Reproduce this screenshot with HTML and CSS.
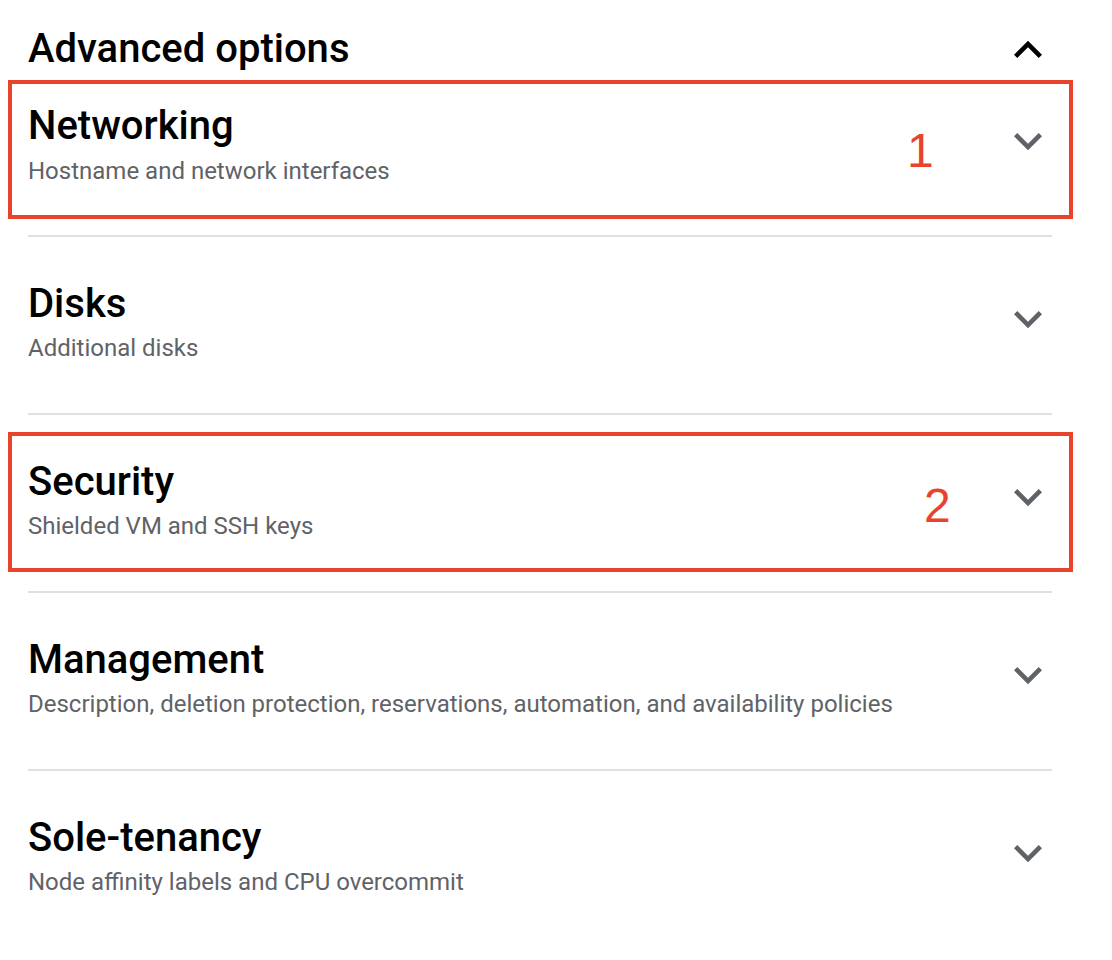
FILE: index.html
```html
<!DOCTYPE html>
<html lang="en">
<head>
<meta charset="utf-8">
<title>Advanced options</title>
<link rel="stylesheet" href="styles.css">
</head>
<body>
<div class="page">
  <div class="header">
    <h2 class="header-title">Advanced options</h2>
    <svg class="chev chev-up" viewBox="0 0 24 24" aria-hidden="true"><path d="M12 8l-6 6 1.41 1.41L12 10.83l4.59 4.58L18 14z"/></svg>
  </div>

  <div class="section">
    <div class="text">
      <div class="title">Networking</div>
      <div class="sub">Hostname and network interfaces</div>
    </div>
    <svg class="chev" viewBox="0 0 24 24" aria-hidden="true"><path d="M16.59 8.59L12 13.17 7.41 8.59 6 10l6 6 6-6z"/></svg>
  </div>

  <div class="section">
    <div class="text">
      <div class="title">Disks</div>
      <div class="sub">Additional disks</div>
    </div>
    <svg class="chev" viewBox="0 0 24 24" aria-hidden="true"><path d="M16.59 8.59L12 13.17 7.41 8.59 6 10l6 6 6-6z"/></svg>
  </div>

  <div class="section">
    <div class="text">
      <div class="title">Security</div>
      <div class="sub">Shielded VM and SSH keys</div>
    </div>
    <svg class="chev" viewBox="0 0 24 24" aria-hidden="true"><path d="M16.59 8.59L12 13.17 7.41 8.59 6 10l6 6 6-6z"/></svg>
  </div>

  <div class="section">
    <div class="text">
      <div class="title">Management</div>
      <div class="sub">Description, deletion protection, reservations, automation, and availability policies</div>
    </div>
    <svg class="chev" viewBox="0 0 24 24" aria-hidden="true"><path d="M16.59 8.59L12 13.17 7.41 8.59 6 10l6 6 6-6z"/></svg>
  </div>

  <div class="section">
    <div class="text">
      <div class="title">Sole-tenancy</div>
      <div class="sub">Node affinity labels and CPU overcommit</div>
    </div>
    <svg class="chev" viewBox="0 0 24 24" aria-hidden="true"><path d="M16.59 8.59L12 13.17 7.41 8.59 6 10l6 6 6-6z"/></svg>
  </div>
</div>

<div class="mark mark-1"></div>
<div class="mark mark-2"></div>
<div class="num num-1">1</div>
<div class="num num-2">2</div>
</body>
</html>
```

FILE: styles.css
```css
html, body {
  margin: 0;
  padding: 0;
  background: #ffffff;
}

body {
  position: relative;
  width: 1112px;
  height: 960px;
  overflow: hidden;
  font-family: Roboto, "Liberation Sans", Arial, sans-serif;
  color: #000000;
}

.page {
  padding: 0 60px 0 28px;
}

.header {
  display: flex;
  align-items: flex-start;
  justify-content: space-between;
  padding-top: 25px;
  height: 53px;
}

.header-title {
  margin: 0;
  font-size: 40px;
  line-height: 48px;
  font-weight: 500;
}

.chev {
  width: 56px;
  height: 56px;
  flex: none;
  margin-right: -4px;
  fill: #5f6368;
}

.chev-up {
  fill: #000000;
  margin-top: -3px;
}

.section {
  display: flex;
  align-items: flex-start;
  justify-content: space-between;
  border-top: 2px solid #e0e0e0;
  padding-top: 43px;
  height: 133px;
}

.section:nth-child(2) {
  border-top: 0;
  padding-top: 24px;
  height: 133px;
}

.section:nth-child(2) .sub {
  margin-top: 7px;
}

.title {
  font-size: 40px;
  line-height: 48px;
  font-weight: 500;
  color: #000000;
}

.sub {
  margin-top: 6px;
  font-size: 24px;
  line-height: 28px;
  color: #5f6368;
}

.section .chev {
  margin-top: 11px;
}

.mark {
  position: absolute;
  left: 8px;
  width: 1065px;
  border: 4px solid #ea432d;
  box-sizing: border-box;
}

.mark-1 {
  top: 80px;
  height: 139px;
}

.mark-2 {
  top: 432px;
  height: 140px;
}

.num {
  position: absolute;
  font-family: "Liberation Sans", Arial, sans-serif;
  font-size: 48px;
  line-height: 48px;
  color: #ea432d;
}

.num-1 {
  left: 907px;
  top: 127px;
}

.num-2 {
  left: 924px;
  top: 482px;
}
```
